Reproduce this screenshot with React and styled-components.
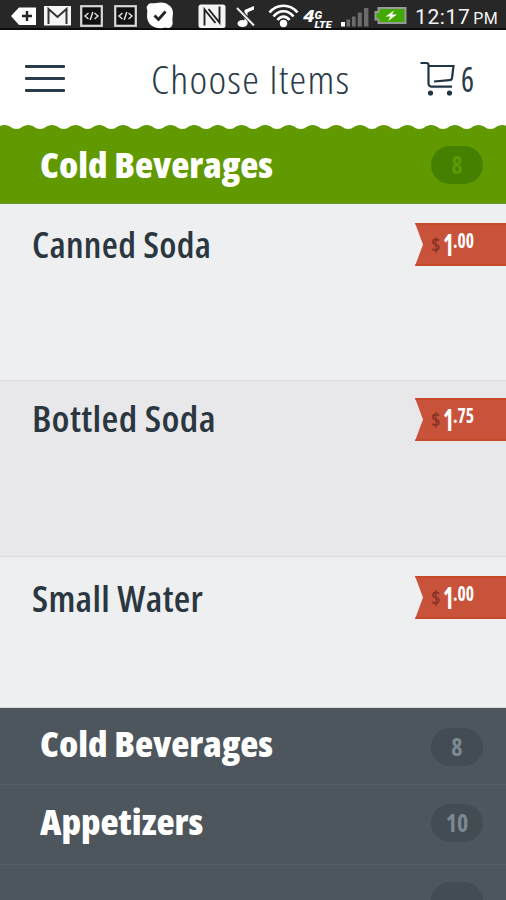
import React from 'react';
import styled, { createGlobalStyle } from 'styled-components';

//Style component

const GlobalStyle = createGlobalStyle`
  * {
    box-sizing: border-box;
  }
  body {
    margin: 0;
    background-color: #4d565d;
    overflow: hidden;
  }
`;

const Screen = styled.div`
  width: 506px;
  height: 900px;
  overflow: hidden;
  display: flex;
  flex-direction: column;
  font-family: 'Open Sans', 'Noto Sans', sans-serif;
`;

const StatusBar = styled.div`
  height: 30px;
  flex: none;
  display: flex;
  background-color: #272727;
  border-bottom: 2px solid #0c0c0c;
  color: #f4f4f4;
`;

const StatusIcon = styled.svg`
  flex: none;
  width: ${(props) => props.$width}px;
  height: 30px;
  margin-left: ${(props) => props.$gap}px;
`;

const Clock = styled.div`
  margin-left: 8px;
  font-family: Roboto, sans-serif;
  font-size: 21px;
  line-height: 34px;
  letter-spacing: 0.6px;
  white-space: nowrap;
`;

const Meridiem = styled.span`
  margin-left: 3px;
  font-size: 16px;
  letter-spacing: 0.4px;
`;

const Header = styled.header`
  height: 95px;
  flex: none;
  display: flex;
  align-items: flex-start;
  background-color: white;
  color: #2a3a47;
`;

const MenuButton = styled.div`
  width: 40px;
  height: 27px;
  margin: 35px 0 0 25px;
  display: flex;
  flex-direction: column;
  justify-content: space-between;
`;

const MenuLine = styled.span`
  height: 3px;
  border-radius: 1px;
  background-color: #283c4c;
`;

const Label = styled.span`
  display: block;
  flex: none;
  width: ${(props) => props.$width}px;
  font-size: ${(props) => props.$size}px;
  font-weight: ${(props) => props.$weight};
  font-stretch: 75%;
  letter-spacing: ${(props) => props.$spacing || 0}px;
  line-height: 50px;
  white-space: nowrap;
  transform: scaleX(${(props) => props.$scale || 1});
  transform-origin: left center;
`;

const Title = styled.div`
  margin: 24px 0 0 86px;
`;

const Cart = styled.div`
  display: flex;
  margin-left: 70px;
`;

const CartIcon = styled.svg`
  width: 36px;
  height: 36px;
  margin-top: 30px;
`;

const CartCount = styled.div`
  margin: 24px 0 0 5px;
`;

const Scallops = styled.svg`
  display: block;
  flex: none;
  width: 506px;
  height: 4px;
  background-color: white;
`;

const Category = styled.div`
  height: ${(props) => props.$height}px;
  flex: none;
  display: flex;
  justify-content: space-between;
  padding: ${(props) => props.$top}px 23px 0 40px;
  background-color: ${(props) => (props.$active ? '#619a00' : '#4d565d')};
  border-bottom: 1px solid ${(props) => (props.$active ? '#6a9436' : '#566067')};
  color: white;
`;

const Badge = styled.div`
  width: 52px;
  height: 38px;
  flex: none;
  margin-top: ${(props) => props.$top}px;
  border-radius: 19px;
  background-color: ${(props) => (props.$active ? '#458000' : '#434c52')};
  color: ${(props) => (props.$active ? '#5b9a05' : '#7b8992')};
  font-size: 24px;
  font-weight: 700;
  font-stretch: 75%;
  line-height: 38px;
  text-align: center;
`;

const Item = styled.div`
  height: ${(props) => props.$height}px;
  flex: none;
  display: flex;
  justify-content: space-between;
  padding-left: 32px;
  background-color: ${(props) => (props.$shaded ? '#e8e8ea' : '#eeeff1')};
  border-bottom: 1px solid #dadbdd;
  color: #2b3740;
`;

const ItemName = styled.div`
  margin-top: ${(props) => props.$top}px;
`;

const PriceTag = styled.div`
  width: 91px;
  height: 43px;
  margin-top: ${(props) => props.$top}px;
  display: flex;
  padding-left: 16px;
  color: white;
  background-color: #c9523a;
  border-top: 2px solid #c64a28;
  border-bottom: 2px solid #c64a28;
  clip-path: polygon(0 0, 100% 0, 100% 100%, 0 100%, 8px 50%);
`;

const PricePart = styled.span`
  flex: none;
  width: ${(props) => props.$width}px;
  font-weight: 700;
  font-stretch: 75%;
  white-space: nowrap;
  transform-origin: left center;
`;

const Currency = styled(PricePart)`
  color: #8b3527;
  font-size: 20px;
  line-height: 40px;
`;

const Dollars = styled(PricePart)`
  font-size: 31px;
  line-height: 39px;
  transform: scaleX(0.74);
`;

const Cents = styled(PricePart)`
  font-size: 21px;
  line-height: 31px;
  transform: scaleX(0.84);
`;

//Data

const items = [
  { name: 'Canned Soda', cents: '00', height: 177, top: 16, tagTop: 19, width: 179, scale: 1.028 },
  { name: 'Bottled Soda', cents: '75', height: 176, top: 13, tagTop: 17, width: 183, scale: 1.073, shaded: true },
  { name: 'Small Water', cents: '00', height: 151, top: 17, tagTop: 19, width: 171, scale: 1.052 },
];

const categories = [
  { name: 'Cold Beverages', count: '8', height: 77, top: 11, badgeTop: 9, width: 233 },
  { name: 'Appetizers', count: '10', height: 80, top: 12, badgeTop: 7, width: 164 },
  { name: '', count: '', height: 80, top: 17, badgeTop: 0, width: 10 },
];

const scallopPath = () => {
  let d = 'M-8 4';
  for (let x = -7.2; x < 520; x += 23.7) {
    d += ` L${x} 4 C${x + 5} 4 ${x + 6} 0 ${x + 11.8} 0 C${x + 17.5} 0 ${x + 18.5} 4 ${x + 23.7} 4`;
  }
  return d + ' Z';
};

//React component

const CodeIcon = ({ gap }) => (
  <StatusIcon $width={23} $gap={gap} viewBox="0 0 23 30">
    <rect x="1.2" y="6.2" width="20.6" height="19.6" fill="#111" stroke="#d8d8d8" strokeWidth="2.2" />
    <path d="M8.5 13 L5 16 L8.5 19 M14.5 13 L18 16 L14.5 19 M12.8 12 L10.2 20" fill="none" stroke="#ddd" strokeWidth="1.5" />
  </StatusIcon>
);

const Status = () => (
  <StatusBar>
    <StatusIcon $width={25} $gap={11} viewBox="0 0 25 30">
      <path d="M0 16 L8 7.5 H25 V25 H8 Z" fill="#fff" />
      <path d="M16 11 V21 M11 16 H21" stroke="#222" strokeWidth="2.4" />
    </StatusIcon>
    <StatusIcon $width={27} $gap={8} viewBox="0 0 27 30">
      <rect x="0" y="6" width="27" height="19.5" fill="#f4f4f4" />
      <path d="M4.5 24 V9 L13.5 17 L22.5 9 V24" fill="none" stroke="#333" strokeWidth="2" />
    </StatusIcon>
    <CodeIcon gap={9} />
    <CodeIcon gap={11} />
    <StatusIcon $width={28} $gap={9} viewBox="0 0 28 30">
      <path d="M2 5 C4 2 7 4 10 3 C15 2 20 2 24 6 C28 10 27 14 26.5 18 C26 21 28 24 25 27 C22 29 20 27 17 28 C10 29 4 26 2 21 C0 15 2 12 1 9 C0 7 1 6 2 5 Z" fill="#fff" />
      <path d="M8.5 15.5 L12.5 19.5 L19.5 11.5" fill="none" stroke="#222" strokeWidth="2.8" />
    </StatusIcon>
    <StatusIcon $width={28} $gap={24} viewBox="0 0 28 30">
      <rect x="0.5" y="4.5" width="27" height="23.5" rx="2.5" fill="#f4f4f4" />
      <path d="M6.5 25.5 V9.5 L17.5 23 M10.5 9 L21.5 22.5 V6.5" fill="none" stroke="#222" strokeWidth="1.9" />
    </StatusIcon>
    <StatusIcon $width={22} $gap={9} viewBox="0 0 22 30">
      <path d="M9.5 23 V10 L19 6 V9.5 L12.5 12.5 V23 Z" fill="#fff" />
      <ellipse cx="7.5" cy="23.5" rx="5" ry="3.6" fill="#fff" />
      <path d="M3 8.5 L20 26.5" stroke="#272727" strokeWidth="4" />
      <path d="M2 8 L19 25.5" stroke="#eee" strokeWidth="2" />
    </StatusIcon>
    <StatusIcon $width={31} $gap={11} viewBox="0 0 31 30">
      <circle cx="15.5" cy="23.5" r="3.7" fill="#fff" />
      <path d="M1.5 12.5 C9 3.5 22 3.5 29.5 12.5 M5.5 16.5 C11 9.5 20 9.5 25.5 16.5 M9.5 20 C13 15.5 18 15.5 21.5 20" fill="none" stroke="#fff" strokeWidth="2.7" />
    </StatusIcon>
    <StatusIcon $width={30} $gap={4} viewBox="0 0 30 30" fill="#fff" fontFamily="Roboto, sans-serif" fontWeight="900" fontStyle="italic">
      <text x="0" y="22" fontSize="17" textLength="11.5" lengthAdjust="spacingAndGlyphs">4</text>
      <text x="11.5" y="18.5" fontSize="11.5">G</text>
      <text x="11.5" y="28" fontSize="8.5" textLength="17" lengthAdjust="spacingAndGlyphs">LTE</text>
    </StatusIcon>
    <StatusIcon $width={28} $gap={8} viewBox="0 0 28 30">
      <rect x="0" y="22" width="4" height="4.5" fill="#fff" />
      <path d="M5.5 19.5h3.6v7h-3.6z M11 16.5h3.6v10h-3.6z M16.8 12.5h4v14h-4z M23 8h4.4v18.5h-4.4z" fill="#6b6b6b" />
    </StatusIcon>
    <StatusIcon $width={33} $gap={5} viewBox="0 0 33 30">
      <path d="M4.5 8 H31.5 V23 H4.5 V19.5 H1.5 V12 H4.5 Z" fill="#41a900" stroke="#999" strokeWidth="2" />
      <path d="M20 10.5 L11.5 16.5 H16.5 L14 21 L23 14.5 H18 Z" fill="#fff" />
    </StatusIcon>
    <Clock>
      12:17<Meridiem>PM</Meridiem>
    </Clock>
  </StatusBar>
);

const App = () => {
  return (
    <Screen>
      <GlobalStyle />
      <Status />
      <Header>
        <MenuButton>
          <MenuLine />
          <MenuLine />
          <MenuLine />
        </MenuButton>
        <Title>
          <Label $width={199} $size={38.5} $weight={300} $spacing={1.1} $scale={1.098}>
            Choose Items
          </Label>
        </Title>
        <Cart>
          <CartIcon viewBox="0 0 36 36" fill="none" stroke="#1f3445" strokeWidth="2.2">
            <path d="M0.5 3 H6.5 Q8.5 3 8.5 5 V23 Q8.5 26.7 12 26.7 H32 M8.5 6 H33.5 L32 18 Q31.7 20 29.5 20.2 L14 21.5" />
            <circle cx="10.5" cy="33" r="2.6" fill="#1f3445" stroke="none" />
            <circle cx="29.5" cy="33" r="2.6" fill="#1f3445" stroke="none" />
          </CartIcon>
          <CartCount>
            <Label $width={14} $size={34} $weight={400} $scale={0.9}>
              6
            </Label>
          </CartCount>
        </Cart>
      </Header>
      <Scallops viewBox="0 0 506 4">
        <path d={scallopPath()} fill="#619a00" />
      </Scallops>
      <Category $active $height={75} $top={11}>
        <Label $width={233} $size={36} $weight={800} $scale={1.037}>
          Cold Beverages
        </Label>
        <Badge $active $top={6}>
          8
        </Badge>
      </Category>
      {items.map((item) => (
        <Item key={item.name} $height={item.height} $shaded={item.shaded}>
          <ItemName $top={item.top}>
            <Label $width={item.width} $size={36} $weight={600} $spacing={0.3} $scale={item.scale}>
              {item.name}
            </Label>
          </ItemName>
          <PriceTag $top={item.tagTop}>
            <Currency $width={12}>$</Currency>
            <Dollars $width={10}>1</Dollars>
            <Cents $width={25}>.{item.cents}</Cents>
          </PriceTag>
        </Item>
      ))}
      {categories.map((category, index) => (
        <Category key={index} $height={category.height} $top={category.top}>
          <Label $width={category.width} $size={36} $weight={800} $scale={1.037}>
            {category.name}
          </Label>
          <Badge $top={category.badgeTop}>{category.count}</Badge>
        </Category>
      ))}
    </Screen>
  );
};

export default App;
